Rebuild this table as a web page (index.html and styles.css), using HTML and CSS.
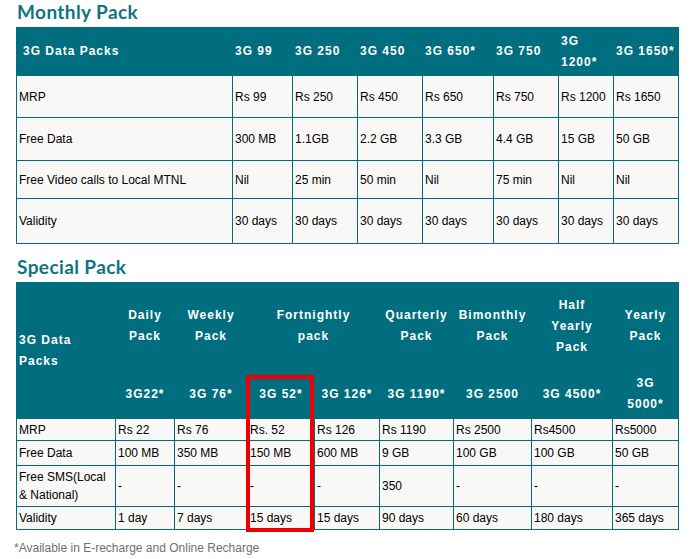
FILE: index.html
```html
<!DOCTYPE html>
<html lang="en">
<head>
    <meta charset="UTF-8">
    <meta name="viewport" content="width=device-width, initial-scale=1.0">
    <title>3G Data Packs</title>
    <link rel="stylesheet" href="styles.css">
</head>
<body>

    <div class="page">
        <h2 class="pack-title">Monthly Pack</h2>
        <table class="pack-table monthly">
            <colgroup>
                <col style="width:216px">
                <col style="width:60px">
                <col style="width:65px">
                <col style="width:65px">
                <col style="width:71px">
                <col style="width:65px">
                <col style="width:55px">
                <col style="width:65px">
            </colgroup>
            <tr class="row-head">
                <th class="first">3G Data Packs</th>
                <th>3G 99</th>
                <th>3G 250</th>
                <th>3G 450</th>
                <th>3G 650*</th>
                <th>3G 750</th>
                <th>3G 1200*</th>
                <th>3G 1650*</th>
            </tr>
            <tr class="row-mrp">
                <td>MRP</td>
                <td>Rs 99</td>
                <td>Rs 250</td>
                <td>Rs 450</td>
                <td>Rs 650</td>
                <td>Rs 750</td>
                <td>Rs 1200</td>
                <td>Rs 1650</td>
            </tr>
            <tr class="row-data">
                <td>Free Data</td>
                <td>300 MB</td>
                <td>1.1GB</td>
                <td>2.2 GB</td>
                <td>3.3 GB</td>
                <td>4.4 GB</td>
                <td>15 GB</td>
                <td>50 GB</td>
            </tr>
            <tr class="row-video">
                <td>Free Video calls to Local MTNL</td>
                <td>Nil</td>
                <td>25 min</td>
                <td>50 min</td>
                <td>Nil</td>
                <td>75 min</td>
                <td>Nil</td>
                <td>Nil</td>
            </tr>
            <tr class="row-validity">
                <td>Validity</td>
                <td>30 days</td>
                <td>30 days</td>
                <td>30 days</td>
                <td>30 days</td>
                <td>30 days</td>
                <td>30 days</td>
                <td>30 days</td>
            </tr>
        </table>

        <h2 class="pack-title special-title">Special Pack</h2>
        <div class="special-wrap">
            <table class="pack-table special">
                <colgroup>
                    <col style="width:99px">
                    <col style="width:59px">
                    <col style="width:73px">
                    <col style="width:67px">
                    <col style="width:65px">
                    <col style="width:74px">
                    <col style="width:78px">
                    <col style="width:81px">
                    <col style="width:66px">
                </colgroup>
                <tr class="row-period">
                    <th class="first" rowspan="2">3G Data<br>Packs</th>
                    <th>Daily<br>Pack</th>
                    <th>Weekly<br>Pack</th>
                    <th colspan="2">Fortnightly<br>pack</th>
                    <th>Quarterly<br>Pack</th>
                    <th>Bimonthly<br>Pack</th>
                    <th>Half<br>Yearly<br>Pack</th>
                    <th>Yearly<br>Pack</th>
                </tr>
                <tr class="row-name">
                    <th>3G22*</th>
                    <th>3G 76*</th>
                    <th>3G 52*</th>
                    <th>3G 126*</th>
                    <th>3G 1190*</th>
                    <th>3G 2500</th>
                    <th>3G 4500*</th>
                    <th>3G<br>5000*</th>
                </tr>
                <tr class="row-mrp">
                    <td>MRP</td>
                    <td>Rs 22</td>
                    <td>Rs 76</td>
                    <td>Rs. 52</td>
                    <td>Rs 126</td>
                    <td>Rs 1190</td>
                    <td>Rs 2500</td>
                    <td>Rs4500</td>
                    <td>Rs5000</td>
                </tr>
                <tr class="row-data">
                    <td>Free Data</td>
                    <td>100 MB</td>
                    <td>350 MB</td>
                    <td>150 MB</td>
                    <td>600 MB</td>
                    <td>9 GB</td>
                    <td>100 GB</td>
                    <td>100 GB</td>
                    <td>50 GB</td>
                </tr>
                <tr class="row-sms">
                    <td>Free SMS(Local &amp; National)</td>
                    <td>-</td>
                    <td>-</td>
                    <td>-</td>
                    <td>-</td>
                    <td>350</td>
                    <td>-</td>
                    <td>-</td>
                    <td>-</td>
                </tr>
                <tr class="row-validity">
                    <td>Validity</td>
                    <td>1 day</td>
                    <td>7 days</td>
                    <td>15 days</td>
                    <td>15 days</td>
                    <td>90 days</td>
                    <td>60 days</td>
                    <td>180 days</td>
                    <td>365 days</td>
                </tr>
            </table>
            <!-- red marker round the fortnightly 3G 52 column -->
            <div class="highlight"></div>
        </div>

        <p class="note">*Available in E-recharge and Online Recharge</p>
    </div>

</body>
</html>
```

FILE: styles.css
```css
body {
    margin: 0;
    background-color: #ffffff;
    font-family: "Liberation Sans", Arial, sans-serif;
    font-size: 12px;
    color: #000000;
}

.page {
    padding-left: 16px;
}

.pack-title {
    margin: 0;
    height: 27px;
    padding-left: 1px;
    font-family: Lato, "Open Sans", sans-serif;
    font-weight: 700;
    font-size: 19px;
    line-height: 23px;
    letter-spacing: 0.4px;
    color: #0f7382;
}

.special-title {
    margin-top: 11px;
}

.pack-table {
    border-collapse: collapse;
    table-layout: fixed;
    width: 663px;
}

.pack-table th,
.pack-table td {
    border: 1px solid #006e7e;
    padding: 0 2px;
    vertical-align: middle;
    text-align: left;
}

.pack-table th {
    background-color: #006e7e;
    color: #ffffff;
    font-weight: bold;
    font-size: 12px;
    line-height: 21px;
    letter-spacing: 1px;
}

.pack-table td {
    background-color: #f9f8f6;
    line-height: 18px;
}

.monthly th.first {
    padding-left: 6px;
}

.monthly .row-head { height: 48px; }
.monthly .row-mrp { height: 42px; }
.monthly .row-data { height: 43px; }
.monthly .row-video { height: 38px; }
.monthly .row-validity { height: 45px; }

.special th {
    text-align: center;
}

.special th.first {
    text-align: left;
}

.special .row-period { height: 87px; }
.special .row-name { height: 49px; }
.special .row-mrp { height: 22px; }
.special .row-data { height: 25px; }
.special .row-sms { height: 41px; }
.special .row-validity { height: 23px; }

.special-wrap {
    position: relative;
    width: 663px;
}

.highlight {
    position: absolute;
    left: 230px;
    top: 93px;
    width: 68px;
    height: 157px;
    box-sizing: border-box;
    border: 4px solid #ee0000;
}

.note {
    margin: 11px 0 0 -2px;
    color: #707070;
    font-size: 12px;
    line-height: 15px;
}
```
